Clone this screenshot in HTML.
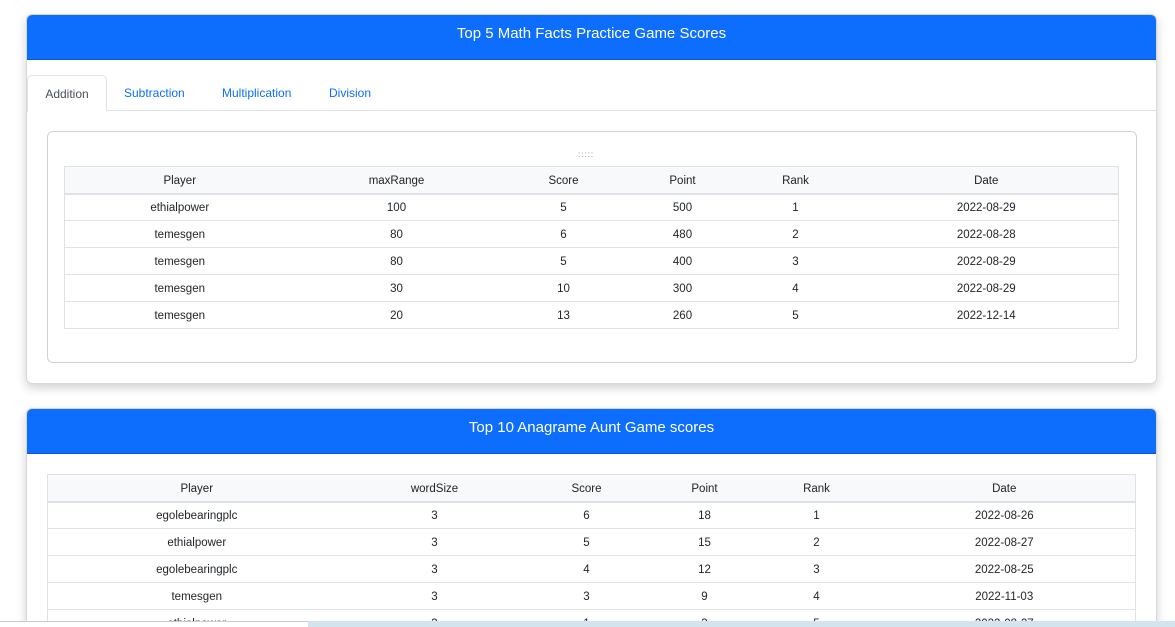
<!DOCTYPE html>
<html style="height:627px;overflow:hidden"><head><meta charset="utf-8"><style>
*{box-sizing:border-box;margin:0;padding:0}
body{width:1175px;height:627px;overflow:hidden;background:#fff;font-family:"Liberation Sans",sans-serif;color:#212529;position:relative}
.card{position:absolute;left:26px;width:1131px;background:#fff;border:1px solid #d6d9dc;border-radius:6px;box-shadow:0 4px 10px rgba(0,0,0,.18);overflow:hidden}
.hdr{background:#0d6efd;color:#fff;text-align:center;font-size:15px;height:45px;line-height:38px;border-bottom:1px solid #0a58ca}
table{position:absolute;border-collapse:collapse;font-size:11.5px;table-layout:fixed;border:1px solid #dee2e6}
td,th{text-align:center;height:27px;border-bottom:1px solid #dee2e6;padding:2px 0 0 0}
th{background:#f8f9fa;font-weight:normal;border-bottom:2px solid #dee2e6;color:#222}
.tabs{position:absolute;top:60px;left:0;width:100%;height:36px;border-bottom:1px solid #dee2e6;font-size:12px}
.tab{position:absolute;top:0;height:37px;line-height:36px;color:#0d6efd}
.tab.act{color:#495057;border:1px solid #dee2e6;border-bottom:1px solid #fff;border-radius:5px 5px 0 0;background:#fff;left:0;width:80px;text-align:center}
.inner{position:absolute;left:20px;top:116px;width:1090px;height:232px;border:1px solid #d0d3d6;border-radius:6px}
</style></head><body>
<div class="card" style="top:14px;height:370px">
<div class="hdr">Top 5 Math Facts Practice Game Scores</div>
<div class="tabs">
<div class="tab act">Addition</div>
<div class="tab" style="left:97px">Subtraction</div>
<div class="tab" style="left:195px">Multiplication</div>
<div class="tab" style="left:302px">Division</div>
</div>
<div class="inner"><div style="position:absolute;left:530px;top:18px;font-size:8px;color:#888;letter-spacing:1px">:::::</div></div>
<table style="left:37px;top:151px;width:1055px">
<colgroup><col style="width:230px"><col style="width:204px"><col style="width:130px"><col style="width:108px"><col style="width:118px"><col></colgroup>
<tr><th>Player</th><th>maxRange</th><th>Score</th><th>Point</th><th>Rank</th><th>Date</th></tr>
<tr><td>ethialpower</td><td>100</td><td>5</td><td>500</td><td>1</td><td>2022-08-29</td></tr>
<tr><td>temesgen</td><td>80</td><td>6</td><td>480</td><td>2</td><td>2022-08-28</td></tr>
<tr><td>temesgen</td><td>80</td><td>5</td><td>400</td><td>3</td><td>2022-08-29</td></tr>
<tr><td>temesgen</td><td>30</td><td>10</td><td>300</td><td>4</td><td>2022-08-29</td></tr>
<tr><td>temesgen</td><td>20</td><td>13</td><td>260</td><td>5</td><td>2022-12-14</td></tr>
</table>
</div>
<div class="card" style="top:408px;height:219px;border-bottom:none;border-radius:6px 6px 0 0">
<div class="hdr">Top 10 Anagrame Aunt Game scores</div>
<table style="left:20px;top:65px;width:1089px">
<colgroup><col style="width:298px"><col style="width:178px"><col style="width:126px"><col style="width:110px"><col style="width:114px"><col></colgroup>
<tr><th>Player</th><th>wordSize</th><th>Score</th><th>Point</th><th>Rank</th><th>Date</th></tr>
<tr><td>egolebearingplc</td><td>3</td><td>6</td><td>18</td><td>1</td><td>2022-08-26</td></tr>
<tr><td>ethialpower</td><td>3</td><td>5</td><td>15</td><td>2</td><td>2022-08-27</td></tr>
<tr><td>egolebearingplc</td><td>3</td><td>4</td><td>12</td><td>3</td><td>2022-08-25</td></tr>
<tr><td>temesgen</td><td>3</td><td>3</td><td>9</td><td>4</td><td>2022-11-03</td></tr>
<tr><td>ethialpower</td><td>3</td><td>1</td><td>3</td><td>5</td><td>2022-08-27</td></tr>
</table>
</div>
<div style="position:absolute;left:0;top:621px;width:308px;height:6px;background:#fff;border-top:1px solid #ccc"></div>
<div style="position:absolute;left:308px;top:621px;width:867px;height:6px;background:#d3e4ee"></div>
</body></html>
